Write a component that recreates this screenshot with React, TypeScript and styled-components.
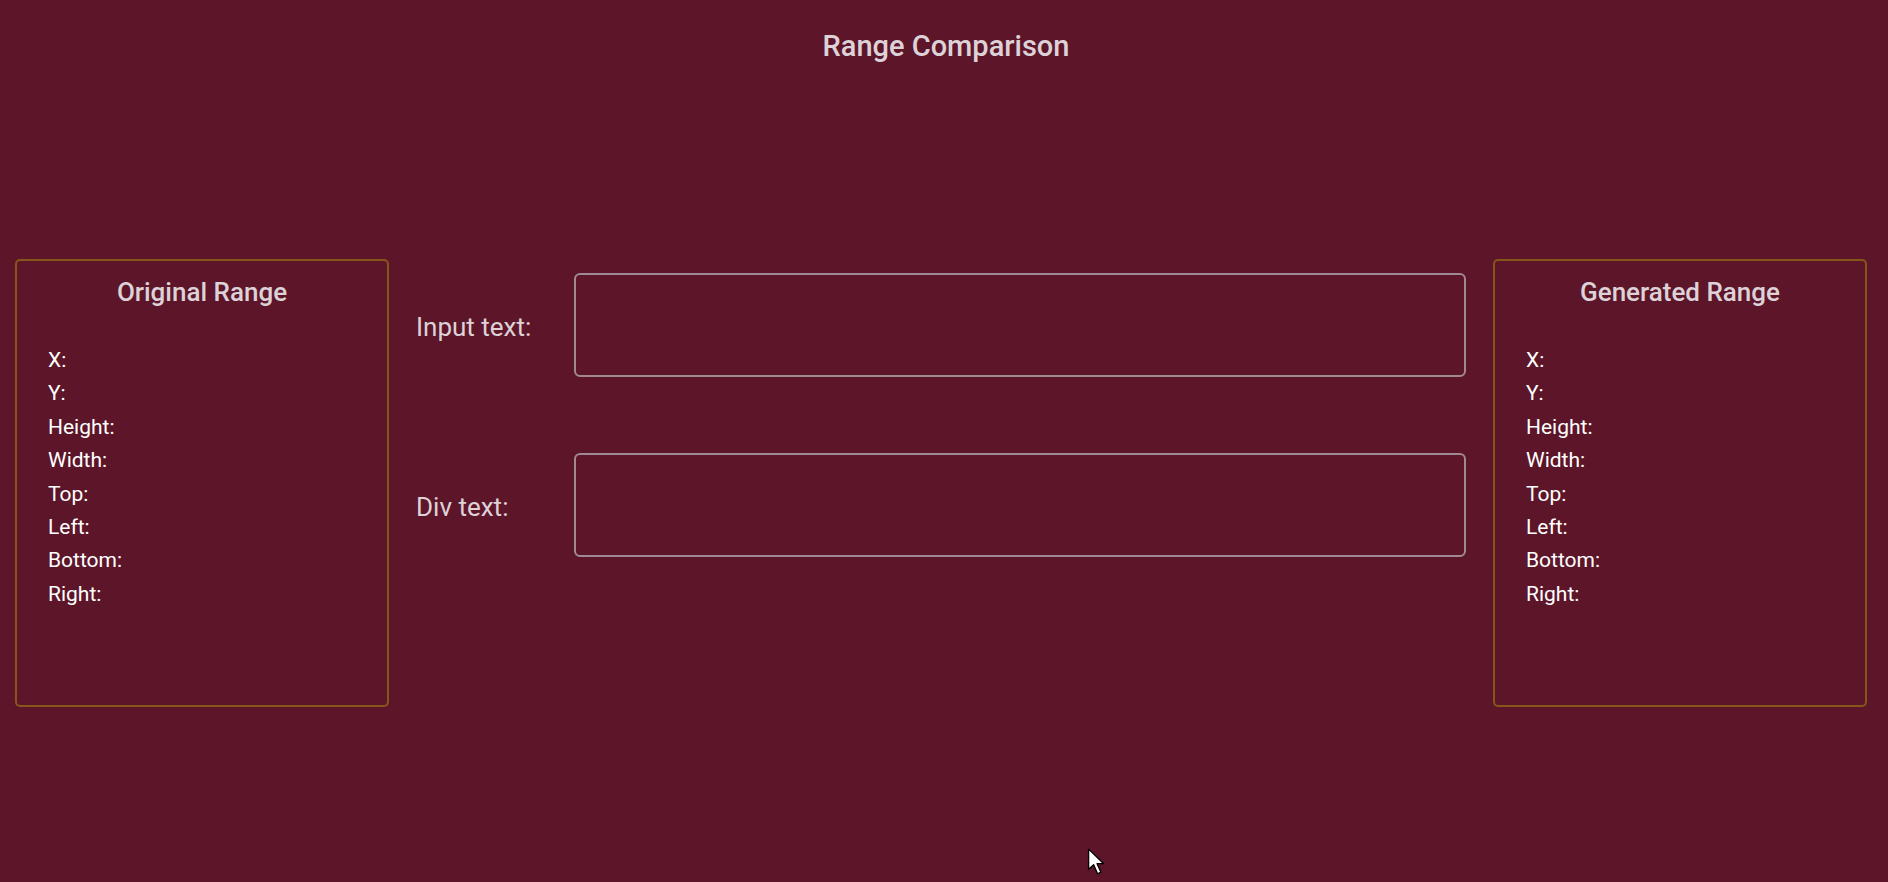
import React from "react";
import styled, { createGlobalStyle } from "styled-components";

const GlobalStyle = createGlobalStyle`
  html, body {
    margin: 0;
    padding: 0;
    background: #5d1629;
  }
  body {
    font-family: Roboto, "Liberation Sans", Arial, sans-serif;
  }
  * { box-sizing: border-box; }
`;

const Page = styled.div`
  position: relative;
  min-height: 882px;
  background: #5d1629;
  overflow: hidden;
`;

const Header = styled.h1`
  margin: 0;
  padding-top: 29px;
  padding-left: 4px;
  text-align: center;
  font-size: 29px;
  line-height: 1.2;
  font-weight: 500;
  color: #ddd2d8;
`;

const Main = styled.main`
  display: flex;
  align-items: flex-start;
  margin-top: 195px;
  padding: 0 21px 0 15px;
`;

const RangeCard = styled.section`
  flex: 0 0 374px;
  height: 448px;
  border: 2.5px solid #86561b;
  border-radius: 5px;
  padding: 16px 12px 0 31px;
`;

const CardTitle = styled.h2`
  margin: 0 0 0 -19px;
  text-align: center;
  font-size: 26px;
  line-height: 1.2;
  font-weight: 500;
  color: #ddd2d8;
`;

const FieldList = styled.ul`
  list-style: none;
  margin: 36px 0 0;
  padding: 0;
`;

const Field = styled.li`
  font-size: 21px;
  line-height: 33.4px;
  color: #ffffff;
`;

const Center = styled.div`
  flex: 1;
  display: flex;
  flex-direction: column;
  gap: 76px;
  margin: 0 27px;
  padding-top: 14px;
`;

const Row = styled.div`
  display: flex;
  align-items: center;
`;

const RowLabel = styled.label`
  flex: 0 0 158px;
  font-size: 26px;
  line-height: 1.2;
  color: #ddd2d8;
  padding-top: 5px;
`;

const TextBox = styled.div`
  flex: 1;
  height: 104px;
  border: 2px solid #a08992;
  border-radius: 6px;
  background: transparent;
`;

const Cursor = styled.svg`
  position: absolute;
  left: 1087px;
  top: 848px;
  width: 20px;
  height: 28px;
`;

const fields = ["X:", "Y:", "Height:", "Width:", "Top:", "Left:", "Bottom:", "Right:"];

function RangePanel({ title }: { title: string }) {
  return (
    <RangeCard>
      <CardTitle>{title}</CardTitle>
      <FieldList>
        {fields.map((f) => (
          <Field key={f}>{f}</Field>
        ))}
      </FieldList>
    </RangeCard>
  );
}

export default function App() {
  return (
    <Page>
      <GlobalStyle />
      <Header>Range Comparison</Header>
      <Main>
        <RangePanel title="Original Range" />
        <Center>
          <Row>
            <RowLabel>Input text:</RowLabel>
            <TextBox />
          </Row>
          <Row>
            <RowLabel>Div text:</RowLabel>
            <TextBox />
          </Row>
        </Center>
        <RangePanel title="Generated Range" />
      </Main>
      <Cursor viewBox="0 0 17 25">
        <path
          d="M1 1 L1 19 L5.5 15 L9 23 L12 21.6 L8.6 14 L14.5 14 Z"
          fill="#ffffff"
          stroke="#000000"
          strokeWidth="1.2"
          strokeLinejoin="round"
        />
      </Cursor>
    </Page>
  );
}
